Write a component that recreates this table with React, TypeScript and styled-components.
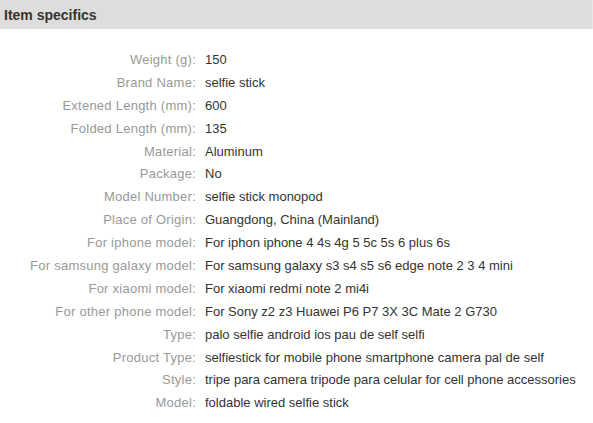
import React from "react";
import styled, { createGlobalStyle } from "styled-components";

const GlobalStyle = createGlobalStyle`
  body {
    margin: 0;
    background: #fff;
    font-family: Arial, "Liberation Sans", sans-serif;
  }
`;

const Wrapper = styled.div`
  width: 593px;
`;

const Header = styled.div`
  height: 29px;
  background: #dddddd;
  border-right: 1px solid #e8e8e8;
  display: flex;
  align-items: center;
  padding-left: 4px;
  box-sizing: border-box;
`;

const Title = styled.h2`
  margin: 0;
  font-size: 14px;
  font-weight: 700;
  color: #333;
`;

const List = styled.dl`
  margin: 0;
  padding-top: 20px;
  display: grid;
  grid-template-columns: 196px 1fr;
  grid-auto-rows: 22.9px;
  column-gap: 9px;
  font-size: 13px;
  line-height: 22.9px;
`;

const Label = styled.dt`
  margin: 0;
  text-align: right;
  color: #999;
  white-space: nowrap;
  letter-spacing: 0.25px;
`;

const Value = styled.dd`
  margin: 0;
  color: #333;
  white-space: nowrap;
`;

const specs: [string, string][] = [
  ["Weight (g):", "150"],
  ["Brand Name:", "selfie stick"],
  ["Extened Length (mm):", "600"],
  ["Folded Length (mm):", "135"],
  ["Material:", "Aluminum"],
  ["Package:", "No"],
  ["Model Number:", "selfie stick monopod"],
  ["Place of Origin:", "Guangdong, China (Mainland)"],
  ["For iphone model:", "For iphon iphone 4 4s 4g 5 5c 5s 6 plus 6s"],
  ["For samsung galaxy model:", "For samsung galaxy s3 s4 s5 s6 edge note 2 3 4 mini"],
  ["For xiaomi model:", "For xiaomi redmi note 2 mi4i"],
  ["For other phone model:", "For Sony z2 z3 Huawei P6 P7 3X 3C Mate 2 G730"],
  ["Type:", "palo selfie android ios pau de self selfi"],
  ["Product Type:", "selfiestick for mobile phone smartphone camera pal de self"],
  ["Style:", "tripe para camera tripode para celular for cell phone accessories"],
  ["Model:", "foldable wired selfie stick"],
];

export default function App() {
  return (
    <Wrapper>
      <GlobalStyle />
      <Header>
        <Title>Item specifics</Title>
      </Header>
      <List>
        {specs.map(([label, value]) => (
          <React.Fragment key={label}>
            <Label>{label}</Label>
            <Value>{value}</Value>
          </React.Fragment>
        ))}
      </List>
    </Wrapper>
  );
}
